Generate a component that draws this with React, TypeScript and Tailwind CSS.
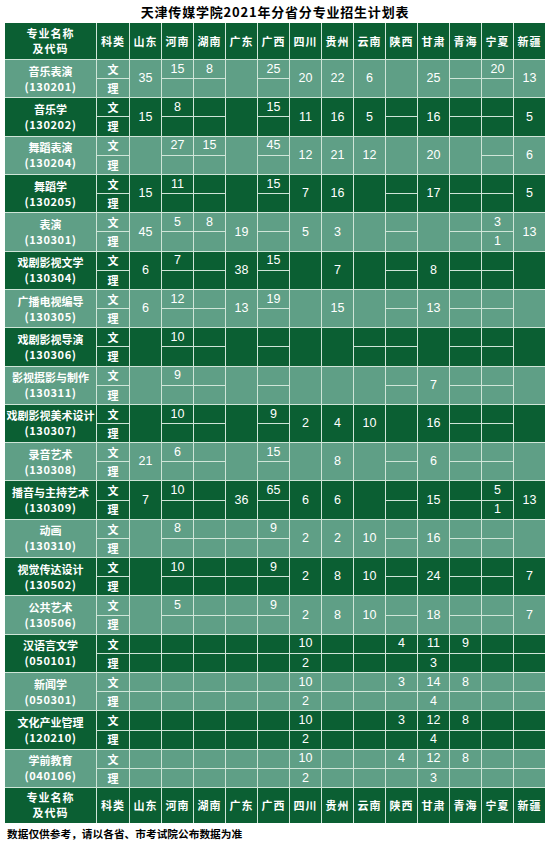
type Cell = string | [string, string];

const s = (a = "", b = ""): [string, string] => [a, b];

const provinces = ["山东", "河南", "湖南", "广东", "广西", "四川", "贵州", "云南", "陕西", "甘肃", "青海", "宁夏", "新疆"];

const majors: { name: string; code: string; cells: Cell[] }[] = [
  { name: "音乐表演", code: "130201", cells: ["35", s("15"), s("8"), "", s("25"), "20", "22", "6", "", "25", s(), s("20"), "13"] },
  { name: "音乐学", code: "130202", cells: ["15", s("8"), s(), "", s("15"), "11", "16", "5", s(), "16", s(), s(), "5"] },
  { name: "舞蹈表演", code: "130204", cells: ["", s("27"), s("15"), "", s("45"), "12", "21", "12", "", "20", "", s(), "6"] },
  { name: "舞蹈学", code: "130205", cells: ["15", s("11"), s(), "", s("15"), "7", "16", "", s(), "17", s(), s(), "5"] },
  { name: "表演", code: "130301", cells: ["45", s("5"), s("8"), "19", s(), "5", "3", "", s(), "", s(), s("3", "1"), "13"] },
  { name: "戏剧影视文学", code: "130304", cells: ["6", s("7"), s(), "38", s("15"), "", "7", "", s(), "8", s(), s(), ""] },
  { name: "广播电视编导", code: "130305", cells: ["6", s("12"), s(), "13", s("19"), "", "15", "", s(), "13", s(), s(), ""] },
  { name: "戏剧影视导演", code: "130306", cells: ["", s("10"), s(), "", s(), "", "", s(), s(), "", s(), s(), ""] },
  { name: "影视摄影与制作", code: "130311", cells: ["", s("9"), s(), "", s(), "", "", "", s(), "7", s(), s(), ""] },
  { name: "戏剧影视美术设计", code: "130307", cells: ["", s("10"), s(), "", s("9"), "2", "4", "10", "", "16", s(), s(), ""] },
  { name: "录音艺术", code: "130308", cells: ["21", s("6"), s(), "", s("15"), "", "8", "", s(), "6", s(), s(), ""] },
  { name: "播音与主持艺术", code: "130309", cells: ["7", s("10"), s(), "36", s("65"), "6", "6", "", s(), "15", s(), s("5", "1"), "13"] },
  { name: "动画", code: "130310", cells: ["", s("8"), s(), s(), s("9"), "2", "2", "10", s(), "16", s(), s(), ""] },
  { name: "视觉传达设计", code: "130502", cells: ["", s("10"), s(), s(), s("9"), "2", "8", "10", s(), "24", s(), s(), "7"] },
  { name: "公共艺术", code: "130506", cells: ["", s("5"), s(), s(), s("9"), "2", "8", "10", s(), "18", s(), s(), "7"] },
  { name: "汉语言文学", code: "050101", cells: [s(), s(), s(), s(), s(), s("10", "2"), s(), s(), s("4"), s("11", "3"), s("9"), s(), s()] },
  { name: "新闻学", code: "050301", cells: [s(), s(), s(), s(), s(), s("10", "2"), s(), s(), s("3"), s("14", "4"), s("8"), s(), s()] },
  { name: "文化产业管理", code: "120210", cells: [s(), s(), s(), s(), s(), s("10", "2"), s(), s(), s("3"), s("12", "4"), s("8"), s(), s()] },
  { name: "学前教育", code: "040106", cells: [s(), s(), s(), s(), s(), s("10", "2"), s(), s(), s("4"), s("12", "3"), s("8"), s(), s()] },
];

const cjk = "font-['Noto_Sans_CJK_SC',sans-serif]";
const num = "font-['Liberation_Sans','Noto_Sans',sans-serif]";

function HeaderRow() {
  return (
    <>
      <div className={`bg-[#0b5f33] text-white font-bold text-[11px] tracking-[1px] flex flex-col items-center justify-center ${cjk}`}>
        <span className="leading-[15px]">专业名称</span>
        <span className="leading-[15px]">及代码</span>
      </div>
      <div className={`bg-[#0b5f33] text-white font-bold text-[11px] tracking-[1px] flex items-center justify-center ${cjk}`}>科类</div>
      {provinces.map((p) => (
        <div key={p} className={`bg-[#0b5f33] text-white font-bold text-[11px] tracking-[1px] flex items-center justify-center ${cjk}`}>
          {p}
        </div>
      ))}
    </>
  );
}

export default function App() {
  return (
    <div className="w-[550px] h-[844px] bg-white overflow-hidden">
      <div className={`h-[23px] flex items-center justify-center text-[13px] font-bold tracking-[0.8px] text-black ${cjk}`}>
        天津传媒学院2021年分省分专业招生计划表
      </div>

      <div className="ml-[5px] w-[540px] h-[800px] grid gap-px bg-[#cfe5d8] grid-cols-[91px_32px_repeat(13,minmax(0,1fr))] grid-rows-[36px_repeat(38,minmax(0,1fr))_35px]">
        <HeaderRow />

        {majors.map((m, i) => {
          const bg = i % 2 === 0 ? "bg-[#5f9f86]" : "bg-[#0b5f33]";
          const cell = `${bg} text-white flex items-center justify-center`;
          const top = m.cells.map((c, j) =>
            typeof c === "string" ? (
              <div key={`t${j}`} className={`${cell} row-span-2 text-[12.5px] ${num}`}>{c}</div>
            ) : (
              <div key={`t${j}`} className={`${cell} text-[12.5px] ${num}`}>{c[0]}</div>
            )
          );
          const bottom = m.cells.flatMap((c, j) =>
            typeof c === "string" ? [] : [<div key={`b${j}`} className={`${cell} text-[12.5px] ${num}`}>{c[1]}</div>]
          );
          return [
            <div key={`n${i}`} className={`${cell} row-span-2 flex-col text-[11px] font-bold ${cjk}`}>
              <span className="leading-[15px]">{m.name}</span>
              <span className="leading-[15px] tracking-[0.6px]">({m.code})</span>
            </div>,
            <div key={`w${i}`} className={`${cell} text-[11px] font-bold ${cjk}`}>文</div>,
            ...top,
            <div key={`l${i}`} className={`${cell} text-[11px] font-bold ${cjk}`}>理</div>,
            ...bottom,
          ];
        })}

        <HeaderRow />
      </div>

      <div className={`pl-[7px] pt-[3px] text-[10.7px] font-bold text-black ${cjk}`}>
        数据仅供参考，请以各省、市考试院公布数据为准
      </div>
    </div>
  );
}
